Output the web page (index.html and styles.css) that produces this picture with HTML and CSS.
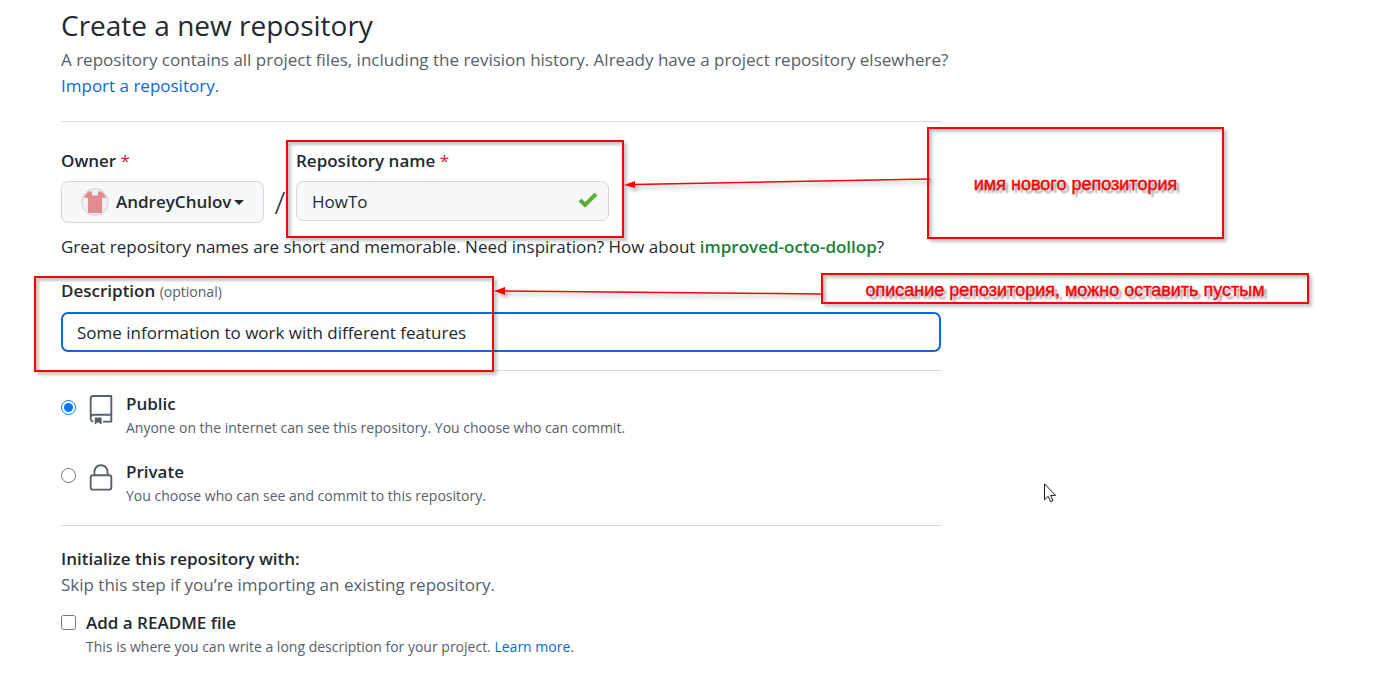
FILE: index.html
```html
<!DOCTYPE html>
<html lang="en">
<head>
<meta charset="utf-8">
<meta name="viewport" content="width=device-width, initial-scale=1">
<title>Create a new repository</title>
<link rel="stylesheet" href="styles.css">
</head>
<body>
<main class="page">
  <h1 class="title">Create a new repository</h1>
  <p class="muted lead">A repository contains all project files, including the revision history. Already have a project repository elsewhere? <a class="link import" href="#">Import a repository.</a></p>
  <form class="form">
    <div class="name-row">
      <div class="field">
        <label class="label" for="owner">Owner <span class="required">*</span></label>
        <button class="owner" id="owner" type="button">
          <svg class="avatar" viewBox="0 0 28 28" aria-hidden="true"><circle cx="14" cy="14" r="13.4" fill="#efefef" stroke="#d2d5d9"/><path d="M7 3.500h4v4h6v-4h4l4.500 6-4.500.500v15H7V10l-4.500-.500z" fill="#e38c90"/></svg>
          <span>AndreyChulov</span>
          <span class="caret"></span>
        </button>
      </div>
      <span class="slash">/</span>
      <div class="field">
        <label class="label" for="repo">Repository name <span class="required">*</span></label>
        <div class="repo-wrap">
          <input class="input repo" id="repo" type="text" value="HowTo">
          <svg class="check" viewBox="0 0 20 16" aria-hidden="true"><path d="M2 8l5 5L18 2" fill="none" stroke="#5bb034" stroke-width="4"/></svg>
        </div>
      </div>
    </div>
    <p class="hint">Great repository names are short and memorable. Need inspiration? How about <strong class="suggestion">improved-octo-dollop</strong>?</p>
    <div class="field description">
      <label class="label" for="desc">Description <span class="optional">(optional)</span></label>
      <input class="input focused" id="desc" type="text" value="Some information to work with different features">
    </div>
    <div class="visibility">
      <div class="choice">
        <input class="radio" type="radio" name="visibility" id="public" checked>
        <svg class="icon" viewBox="0 0 24 24" aria-hidden="true"><path fill-rule="evenodd" d="M3 2.750A2.750 2.750 0 015.750 0h14.500a.750.750 0 01.750.750v20.500a.750.750 0 01-.750.750h-6a.750.750 0 010-1.500h5.250v-4H6A1.500 1.500 0 004.500 18v.750c0 .716.430 1.334 1.050 1.605a.750.750 0 01-.600 1.374A3.250 3.250 0 013 18.750v-16zM19.500 1.500V15H6c-.546 0-1.059.146-1.500.401V2.750c0-.690.560-1.250 1.250-1.250H19.500z"/><path d="M7 18.250a.250.250 0 01.250-.250h5a.250.250 0 01.250.250v5.010a.250.250 0 01-.397.201l-2.206-1.604a.250.250 0 00-.294 0L7.397 23.460a.250.250 0 01-.397-.200v-5.010z"/></svg>
        <label for="public"><span class="choice-title">Public</span><span class="note">Anyone on the internet can see this repository. You choose who can commit.</span></label>
      </div>
      <div class="choice">
        <input class="radio" type="radio" name="visibility" id="private">
        <svg class="icon" viewBox="0 0 24 24" aria-hidden="true"><path fill-rule="evenodd" d="M6 9V7.250C6 3.845 8.503 1 12 1s6 2.845 6 6.250V9h.500a2.500 2.500 0 012.500 2.500v8a2.500 2.500 0 01-2.500 2.500h-13A2.500 2.500 0 013 19.500v-8A2.500 2.500 0 015.500 9H6zm1.500-1.750C7.500 4.580 9.422 2.500 12 2.500c2.578 0 4.500 2.080 4.500 4.750V9h-9V7.250zm-3 4.250a1 1 0 011-1h13a1 1 0 011 1v8a1 1 0 01-1 1h-13a1 1 0 01-1-1v-8z"/></svg>
        <label for="private"><span class="choice-title">Private</span><span class="note">You choose who can see and commit to this repository.</span></label>
      </div>
    </div>
    <section class="init">
      <h2 class="choice-title">Initialize this repository with:</h2>
      <p class="muted">Skip this step if you’re importing an existing repository.</p>
      <div class="readme">
        <input class="radio" type="checkbox" id="readme">
        <div><label class="choice-title" for="readme">Add a README file</label><span class="note">This is where you can write a long description for your project. <a class="link" href="#">Learn more.</a></span></div>
      </div>
    </section>
  </form>
</main>
<div class="mark mark-name"></div>
<div class="mark mark-desc"></div>
<div class="mark callout callout-name">имя нового репозитория</div>
<div class="mark callout callout-desc">описание репозитория, можно оставить пустым</div>
<svg class="arrows" width="1397" height="400" aria-hidden="true">
  <g stroke="#f00" stroke-width="1.500" fill="#f00"><path d="M930 179L634 184.500M822 294L504 291"/><path stroke="none" d="M624 185l11-4v7zM494 291l11-4v8z"/></g>
</svg>
<svg class="cursor" viewBox="0 0 12 20" aria-hidden="true"><path d="M.5.800v16l3.700-3.500 2.500 5.500 2.400-1.100-2.500-5.300h5z" fill="#fff" stroke="#1b1b28"/></svg>
</body>
</html>
```
FILE: styles.css
```css
* { box-sizing: border-box; }
body {
  margin: 0;
  position: relative;
  background: #fff;
  color: #24292f;
  font: 17px/26px "Open Sans", "Noto Sans", sans-serif;
}
p, h1, h2 { margin: 0; }
.page { max-width: 941px; padding: 3px 0 10px 61px; }
.title { font-size: 28px; line-height: 44px; font-weight: 400; }
.muted { color: #57606a; }
.lead { margin-right: -20px; }
.link { color: #0969da; text-decoration: none; }
.import { display: block; }
.form { margin-top: 22px; padding-top: 26px; border-top: 1px solid #d8dee4; }
.name-row { display: flex; align-items: flex-start; }
.field { display: flex; flex-direction: column; gap: 7px; }
.label, .choice-title { font-size: 17px; line-height: 26px; font-weight: 600; }
.required { color: #cf222e; font-weight: 400; }
.owner {
  display: flex;
  align-items: center;
  width: 203px;
  height: 42px;
  padding: 0 19px;
  border: 1px solid #d3d7dc;
  border-radius: 7px;
  background: #f6f8fa;
  color: #24292f;
  font: inherit;
  font-weight: 600;
}
.avatar { width: 28px; height: 28px; margin-right: 7px; flex: none; }
.caret { margin-left: 3px; border: 5px solid transparent; border-top-color: #24292f; border-bottom: 0; }
.slash { width: 32px; margin-top: 33px; text-align: center; font-size: 32px; line-height: 42px; font-weight: 300; }
.input {
  width: 100%;
  height: 40px;
  padding: 0 15px;
  border: 1px solid #d0d7de;
  border-radius: 7px;
  background: #f6f8fa;
  color: #24292f;
  font: inherit;
}
.repo-wrap { position: relative; display: flex; width: 313px; }
.check { position: absolute; right: 11px; top: 11px; width: 20px; height: 16px; }
.focused { border: 2px solid #0969da; padding: 0 14px; background: #fff; outline: 0; }
.hint { margin-top: 11px; }
.suggestion { color: #1a7f37; font-weight: 600; }
.description { margin-top: 18px; }
.optional { color: #57606a; font-size: 14px; font-weight: 500; }
.visibility {
  display: flex;
  flex-direction: column;
  gap: 20px;
  margin-top: 18px;
  padding: 20px 0 18px;
  border-top: 1px solid #d8dee4;
}
.choice, .readme { display: flex; align-items: flex-start; }
.radio { flex: none; width: 15px; height: 15px; margin: 9px 10px 0 0; accent-color: #0075ff; }
.icon { flex: none; width: 30px; height: 30px; margin: 4px 10px 0 0; fill: #57606a; }
.choice-title, .note { display: block; }
.note { color: #57606a; font-size: 14px; line-height: 22px; }
.init { padding-top: 20px; border-top: 1px solid #d8dee4; }
.readme { margin-top: 12px; }
.readme .radio { margin-top: 5px; }

/* Annotations over the form */
.mark { position: absolute; border: 2px solid #f00; box-shadow: 3px 3px 3px rgba(0,0,0,.22), inset 3px 3px 3px rgba(0,0,0,.22); }
.mark-name { left: 286px; top: 140px; width: 338px; height: 98px; }
.mark-desc { left: 34px; top: 276px; width: 460px; height: 96px; }
.callout {
  display: flex;
  align-items: center;
  justify-content: center;
  padding-top: 2px;
  color: #f00;
  font: 18px/20px "Liberation Sans", Arial, sans-serif;
  -webkit-text-stroke: 0.4px #f00;
  text-shadow: 3px 3px 2px rgba(0,0,0,.4);
}
.callout-name { left: 927px; top: 127px; width: 297px; height: 112px; }
.callout-desc { left: 821px; top: 273px; width: 488px; height: 31px; }
.arrows { position: absolute; left: 0; top: 0; filter: drop-shadow(3px 3px 2px rgba(0,0,0,.3)); pointer-events: none; }
.cursor { position: absolute; left: 1044px; top: 483px; width: 12px; height: 20px; }
```
